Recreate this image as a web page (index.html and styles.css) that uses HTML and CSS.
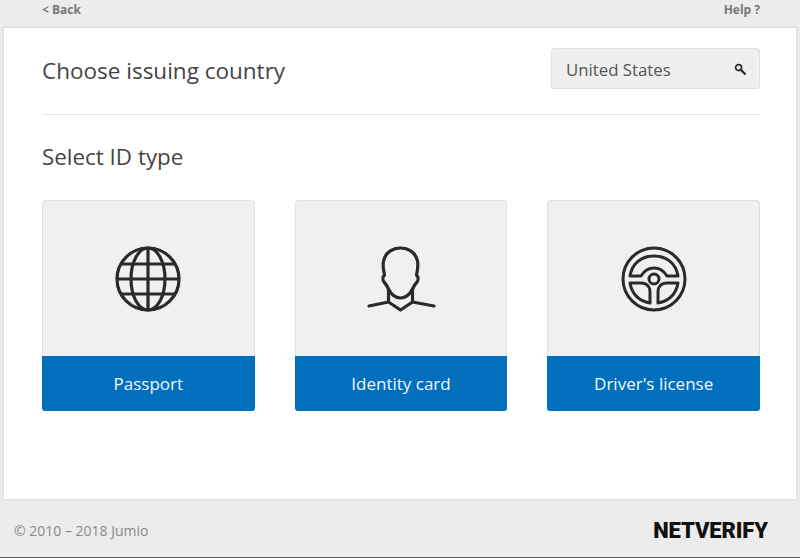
FILE: index.html
```html
<!DOCTYPE html>
<html lang="en">
<head>
<meta charset="utf-8">
<title>Netverify</title>
<link rel="stylesheet" href="styles.css">
</head>
<body>
<div class="page">
  <header class="topbar">
    <a class="toplink">&lt; Back</a>
    <a class="toplink">Help ?</a>
  </header>
  <main class="content">
    <section class="country">
      <h1 class="title">Choose issuing country</h1>
      <div class="search">
        <span>United States</span>
        <svg class="search-icon" width="12" height="12" viewBox="0 0 12 12"><circle cx="4.6" cy="4.6" r="3" fill="none" stroke="#2b2b2b" stroke-width="1.7"/><path d="M6.900 6.900L10.800 10.800" stroke="#2b2b2b" stroke-width="2.300" stroke-linecap="round"/></svg>
      </div>
    </section>
    <h2 class="subtitle">Select ID type</h2>
    <div class="cards">
      <div class="card">
        <div class="card-icon">
          <svg width="66" height="66" viewBox="0 0 66 66" fill="none" stroke="#2a2a2a" stroke-width="3.2">
            <circle cx="33" cy="33" r="31"/>
            <ellipse cx="33" cy="33" rx="17" ry="31"/>
            <path d="M33 2V64M2 33H64M7 18H59M7 48H59"/>
          </svg>
        </div>
        <div class="card-label">Passport</div>
      </div>
      <div class="card">
        <div class="card-icon">
          <svg class="person-icon" width="70" height="66" viewBox="0 0 70 66" fill="none" stroke="#2a2a2a" stroke-width="3.2" stroke-linecap="round" stroke-linejoin="round">
            <path d="M18.500 29C17.500 24 16.500 20 17.500 15C19.500 6 27 2 34.500 2C42 2 49.500 6 51.500 15C52.500 20 51.500 24 50.500 29C52.500 31 52.500 34 51 36C49 38 48 40 46.500 43C44 48 40 52 34.500 52C29 52 25 48 22.500 43C21 40 20 38 18 36C16.500 34 16.500 31 18.500 29Z"/>
            <path d="M22.500 43V56M46.500 43V56M22.500 56L34.500 64L46.500 56M22.500 56L3 60M46.500 56L68 60"/>
          </svg>
        </div>
        <div class="card-label">Identity card</div>
      </div>
      <div class="card">
        <div class="card-icon">
          <svg width="66" height="66" viewBox="0 0 66 66" fill="none" stroke="#2a2a2a" stroke-width="3" stroke-linejoin="round">
            <circle cx="33" cy="33" r="31"/>
            <path d="M9 30C11 17 21 10 33 10C45 10 55 17 57 30H46C43 25 38 22 33 22C28 22 23 25 20 30Z"/>
            <circle cx="33" cy="33" r="5"/>
            <path d="M9 37H20C26 37 29 41 29 46V57C18 55 11 48 9 37Z"/>
            <path d="M57 37H46C40 37 37 41 37 46V57C48 55 55 48 57 37Z"/>
          </svg>
        </div>
        <div class="card-label">Driver's license</div>
      </div>
    </div>
  </main>
  <footer class="footer">
    <span class="copyright">© 2010 – 2018 Jumio</span>
    <span class="logo">NETVERIFY</span>
  </footer>
</div>
</body>
</html>
```

FILE: styles.css
```css
* {
  box-sizing: border-box;
}

html,
body {
  margin: 0;
  height: 100%;
}

body {
  background: #ececec;
  font-family: "Open Sans", "Noto Sans", sans-serif;
  color: #444;
}

.page {
  height: 558px;
  display: flex;
  flex-direction: column;
  border-bottom: 1px solid #555;
}

.topbar {
  height: 28px;
  padding: 0 40px 9px 42px;
  display: flex;
  justify-content: space-between;
  align-items: center;
  border-bottom: 1px solid #e4e4e4;
}

.toplink {
  font-size: 12px;
  font-weight: 700;
  color: #777;
}

.content {
  height: 471px;
  margin: 0 4px;
  padding: 20px 36px 0 38px;
  background: #fff;
  box-shadow: 0 0 3px rgba(0, 0, 0, 0.12);
}

.country {
  height: 67px;
  display: flex;
  justify-content: space-between;
  align-items: flex-start;
  border-bottom: 1px solid #e6e6e6;
}

.title {
  margin: 0;
  padding-top: 6px;
  font-size: 22.5px;
  line-height: 33px;
  font-weight: 400;
  color: #444;
}

.search {
  width: 209px;
  height: 41px;
  padding: 2px 13px 0 14px;
  display: flex;
  justify-content: space-between;
  align-items: center;
  background: #efefef;
  border: 1px solid #e0e0e0;
  border-radius: 3px;
  font-size: 16.8px;
  color: #555;
}

.search-icon {
  margin-top: -2px;
}

.subtitle {
  margin: 27px 0 28px;
  font-size: 22.4px;
  line-height: 30px;
  font-weight: 400;
  color: #444;
}

.cards {
  display: flex;
  justify-content: space-between;
}

.card {
  width: 212.7px;
  height: 211px;
  display: flex;
  flex-direction: column;
  border-radius: 3px;
  overflow: hidden;
}

.card-icon {
  height: 156px;
  display: flex;
  align-items: center;
  justify-content: center;
  background: #f0f0f0;
  border: 1px solid #e0e0e0;
  border-bottom: 0;
  border-radius: 3px 3px 0 0;
}

.person-icon {
  margin-right: 1px;
}

.card-label {
  flex: 1;
  display: flex;
  align-items: center;
  justify-content: center;
  background: #016fbc;
  color: #f2f7fb;
  font-size: 17px;
}

.footer {
  flex: 1;
  padding: 4px 32px 0 14px;
  display: flex;
  justify-content: space-between;
  align-items: center;
}

.copyright {
  font-size: 14px;
  color: #888;
}

.logo {
  font-family: "Roboto", "Liberation Sans", sans-serif;
  font-size: 22px;
  font-weight: 900;
  letter-spacing: -0.1px;
  color: #111;
}
```
